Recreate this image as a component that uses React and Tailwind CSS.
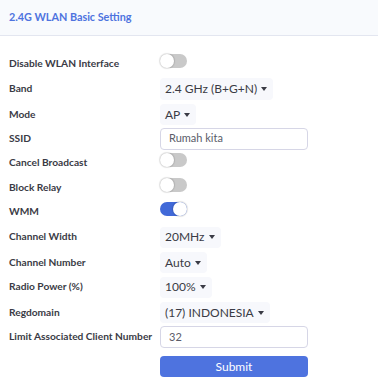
import React from 'react';

const font = { fontFamily: 'Lato, "Open Sans", sans-serif' };

function Toggle({ on }) {
  return (
    <div
      className={`relative w-[27px] h-[14px] rounded-full ${on ? 'bg-[#4169d8]' : 'bg-[#c9c9c9]'}`}
    >
      <div
        className={`absolute top-0 w-[14px] h-[14px] rounded-full bg-white shadow-[0_0_1px_1px_rgba(0,0,0,0.12)] ${on ? 'right-0' : 'left-0'}`}
      />
    </div>
  );
}

function Dropdown({ value, h = 'h-[22px]' }) {
  return (
    <div className={`${h} flex items-center gap-[4px] pl-[5px] pr-[6px] rounded-[4px] bg-[#f7f8fc] text-[12px] text-[#3a3b45]`}>
      <span>{value}</span>
      <span className="w-0 h-0 border-l-[3px] border-r-[3px] border-t-[4px] border-l-transparent border-r-transparent border-t-[#3a3b45]" />
    </div>
  );
}

function Input({ value }) {
  return (
    <div className="w-[148px] h-[22px] flex items-center pl-[8px] rounded-[4px] border border-[#d6d6e6] bg-white text-[11px] text-[#5a5c69]">
      {value}
    </div>
  );
}

function Row({ label, h, children, shift = '' }) {
  return (
    <div className={`flex items-center ${h}`}>
      <div className="w-[160px] pl-[9px] text-[10.2px] font-bold text-[#3a3b45] whitespace-nowrap">{label}</div>
      <div className={shift}>{children}</div>
    </div>
  );
}

export default function App() {
  return (
    <div className="w-[378px] h-[391px] bg-white overflow-hidden" style={font}>
      <div className="h-[36px] flex items-center pl-[9px] bg-[#f8fafd] border-b border-[#e3e6f0]">
        <span className="text-[10.8px] font-bold text-[#4e73df]">2.4G WLAN Basic Setting</span>
      </div>

      <div className="pt-[15px]">
        <Row label="Disable WLAN Interface" h="h-[25px]" shift="mb-[6px]">
          <Toggle />
        </Row>
        <Row label="Band" h="h-[26px]">
          <Dropdown value="2.4 GHz (B+G+N)" />
        </Row>
        <Row label="Mode" h="h-[25px]">
          <Dropdown value="AP" h="h-[21px]" />
        </Row>
        <Row label="SSID" h="h-[23px]">
          <Input value="Rumah kita" />
        </Row>
        <Row label="Cancel Broadcast" h="h-[25px]" shift="mb-[5px]">
          <Toggle />
        </Row>
        <Row label="Block Relay" h="h-[25px]" shift="mb-[5px]">
          <Toggle />
        </Row>
        <Row label="WMM" h="h-[23px]" shift="mb-[5px]">
          <Toggle on />
        </Row>
        <Row label="Channel Width" h="h-[28px]">
          <Dropdown value="20MHz" h="h-[21px]" />
        </Row>
        <Row label="Channel Number" h="h-[23px]">
          <Dropdown value="Auto" h="h-[21px]" />
        </Row>
        <Row label="Radio Power (%)" h="h-[26px]">
          <Dropdown value="100%" h="h-[21px]" />
        </Row>
        <Row label="Regdomain" h="h-[25px]">
          <Dropdown value="(17) INDONESIA" h="h-[21px]" />
        </Row>
        <Row label="Limit Associated Client Number" h="h-[24px]">
          <Input value="32" />
        </Row>
        <div className="pl-[160px] pt-[7px]">
          <button className="w-[148px] h-[21px] rounded-[4px] bg-[#4e73df] text-white text-[12px] flex items-center justify-center">
            Submit
          </button>
        </div>
      </div>
    </div>
  );
}
